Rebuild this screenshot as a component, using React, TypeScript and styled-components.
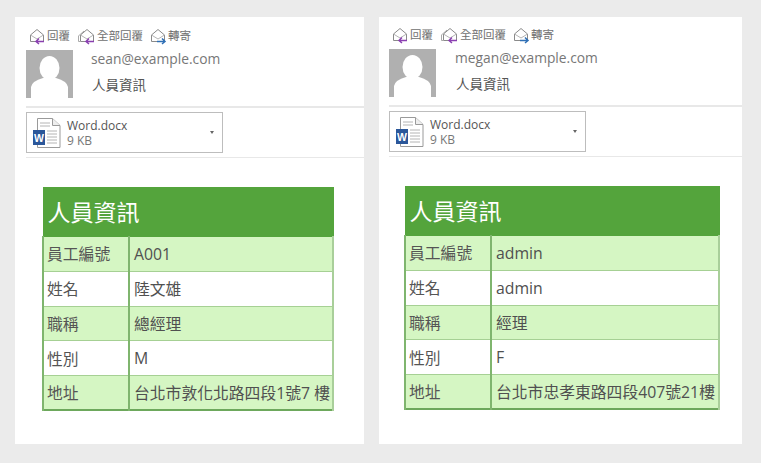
import React from "react";
import styled, { createGlobalStyle } from "styled-components";

const Global = createGlobalStyle`
  html, body { margin: 0; padding: 0; background: #ebebeb; }
  body { font-family: "Open Sans", "Noto Sans CJK TC", sans-serif; }
`;
const FONT = `"Open Sans", "Noto Sans CJK TC", sans-serif`;

const Page = styled.div`
  width: 761px; height: 463px; box-sizing: border-box;
  display: flex; align-items: flex-start; overflow: hidden;
  padding: 17px 0 0 15px; gap: 15px;
`;
const Card = styled.section<{ $w: number; $pad: number }>`
  width: ${p => p.$w}px; height: 427px; background: #fff; box-sizing: border-box;
  padding-left: ${p => p.$pad}px; display: flex; flex-direction: column;
`;
const Toolbar = styled.div<{ $top: number }>`
  display: flex; align-items: center; height: 20px; margin-top: ${p => p.$top}px; padding-left: 3px; gap: 7px;
`;
const Action = styled.div`
  display: flex; align-items: center; gap: 1px; font: 11.5px ${FONT}; color: #707070; line-height: 20px;
`;
const Header = styled.div`
  display: flex; margin-top: 4px; height: 48px;
`;
const Avatar = styled.svg`
  width: 47px; height: 48px; display: block; flex: none;
`;
const HeaderText = styled.div<{ $left: number }>`
  margin-left: ${p => p.$left}px; display: flex; flex-direction: column;
`;
const Email = styled.div`
  font: 13.8px/18px ${FONT}; color: #777;
`;
const Subject = styled.div`
  font: 13.5px/18px ${FONT}; color: #555; margin: 8px 0 0 1px;
`;
const Divider = styled.div<{ $top: number; $h?: number }>`
  height: ${p => p.$h ?? 1}px; background: #e8e8e8; margin-top: ${p => p.$top}px;
`;
const Attachment = styled.div`
  width: 197px; height: 41px; box-sizing: border-box; border: 1px solid #bdbdbd; margin-top: 4px;
  display: flex; align-items: center; padding-left: 6px;
`;
const FileInfo = styled.div`
  margin-left: 6px; flex: 1; display: flex; flex-direction: column;
`;
const FileName = styled.div`
  color: #555; font: 12px/15px ${FONT};
`;
const FileSize = styled.div`
  color: #777; font: 12px/15px ${FONT};
`;
const Caret = styled.div`
  width: 0; height: 0; border: 2.5px solid transparent; border-top: 3px solid #666; border-bottom: 0; margin-right: 8px;
`;
const Sheet = styled.table<{ $w: number; $first: number; $ml: number; $mt: number }>`
  width: ${p => p.$w}px; border-collapse: collapse; table-layout: fixed;
  margin: ${p => p.$mt}px 0 0 ${p => p.$ml}px;
  border: 1px solid #8fbc80; border-bottom: 2px solid #6da85c; box-sizing: border-box;
  font-family: ${FONT};
  col:first-child { width: ${p => p.$first}px; }
`;
const TitleCell = styled.th`
  background: #54a43c; color: #fff; height: 48px; padding: 0 0 0 4px; text-align: left;
  font: 400 23px/48px ${FONT}; border: 1px solid #54a43c;
`;
const Row = styled.tr<{ $alt: boolean }>`
  background: ${p => (p.$alt ? "#d5f6c3" : "#fff")};
  height: 34.8px;
`;
const Label = styled.td`
  border: 1px solid #a6d094; border-left: 2px solid #7fb56e; border-right: 2px solid #7fb56e;
  padding: 0 0 0 3px; font-size: 15.8px; color: #555; white-space: nowrap;
`;
const Value = styled.td`
  border: 1px solid #a6d094; border-right: 2px solid #a9cf9a; padding: 0 0 0 4px; font-size: 15.8px; color: #505050; white-space: nowrap; overflow: hidden;
`;

const Env: React.FC<{ kind: "r" | "a" | "f" }> = ({ kind }) => {
  const c = kind === "f" ? "#2f6fb5" : "#8a3fb0";
  return (
    <svg width={kind === "a" ? 19 : 17} height="17" viewBox={kind === "a" ? "0 0 19 17" : "0 0 17 17"} fill="none">
      {kind === "a" && <path d="M2 7.5 L7 3 M1.5 7.5 V13.5 H3" stroke="#aaa" />}
      <g transform={kind === "a" ? "translate(2 0)" : undefined}>
        <path d="M1.5 7 L8 1.5 L14.5 7 V13.5 H1.5 Z" fill="#fff" stroke="#8a8a8a" />
        <path d="M1.5 7 L8 11 L14.5 7" stroke="#b5b5b5" />
        {kind === "f" ? (
          <path d="M7 13.5 H15 M12 10.5 L15 13.5 L12 16" stroke={c} strokeWidth="1.5" />
        ) : (
          <path d="M15 13.5 H7 M10 10.5 L7 13.5 L10 16" stroke={c} strokeWidth="1.5" />
        )}
      </g>
    </svg>
  );
};

const WordIcon = () => (
  <svg width="28" height="32" viewBox="0 0 28 32" fill="none">
    <path d="M4.5 1.5 H19.5 L27 8.5 V30.5 H4.5 Z" fill="#fff" stroke="#9a9a9a" />
    <path d="M19.5 1.5 V8.5 H27" fill="#eee" stroke="#9a9a9a" />
    <path d="M7 6h10M7 9h10M14 14h10M14 17h10M14 20h10M14 23h10M14 26h10" stroke="#b4b4b4" />
    <rect x="0" y="13" width="12" height="15" fill="#2b579a" />
    <text x="6" y="24.5" textAnchor="middle" fontSize="10.5" fontWeight="700" fill="#fff" fontFamily="Liberation Sans, sans-serif">W</text>
  </svg>
);

type Mail = {
  w: number; pad: number; top: number; email: string; textLeft: number;
  tw: number; first: number; ml: number; mt: number; rows: [string, string][];
};

const mails: Mail[] = [
  {
    w: 349, pad: 11, top: 9, email: "sean@example.com", textLeft: 18,
    tw: 292, first: 86, ml: 16, mt: 29,
    rows: [["員工編號", "A001"], ["姓名", "陸文雄"], ["職稱", "總經理"], ["性別", "M"], ["地址", "台北市敦化北路四段1號7 樓"]],
  },
  {
    w: 363, pad: 10, top: 8, email: "megan@example.com", textLeft: 19,
    tw: 316, first: 86, ml: 15, mt: 29,
    rows: [["員工編號", "admin"], ["姓名", "admin"], ["職稱", "經理"], ["性別", "F"], ["地址", "台北市忠孝東路四段407號21樓"]],
  },
];

const MailCard: React.FC<{ m: Mail }> = ({ m }) => (
  <Card $w={m.w} $pad={m.pad}>
    <Toolbar $top={m.top}>
      <Action><Env kind="r" />回覆</Action>
      <Action><Env kind="a" />全部回覆</Action>
      <Action><Env kind="f" />轉寄</Action>
    </Toolbar>
    <Header>
      <Avatar viewBox="0 0 47 48">
        <rect width="47" height="48" fill="#b0b0b0" />
        <ellipse cx="23.5" cy="18" rx="10" ry="12" fill="#fff" />
        <path d="M5 48 V37 Q6 31 17 28 H30 Q41 31 42 37 V48 Z" fill="#fff" />
      </Avatar>
      <HeaderText $left={m.textLeft}>
        <Email>{m.email}</Email>
        <Subject>人員資訊</Subject>
      </HeaderText>
    </Header>
    <Divider $top={8} $h={2} />
    <Attachment>
      <WordIcon />
      <FileInfo>
        <FileName>Word.docx</FileName>
        <FileSize>9 KB</FileSize>
      </FileInfo>
      <Caret />
    </Attachment>
    <Divider $top={4} />
    <Sheet $w={m.tw} $first={m.first} $ml={m.ml} $mt={m.mt}>
      <colgroup><col /><col /></colgroup>
      <thead><tr><TitleCell colSpan={2}>人員資訊</TitleCell></tr></thead>
      <tbody>
        {m.rows.map(([k, v], i) => (
          <Row key={k} $alt={i % 2 === 0}><Label>{k}</Label><Value>{v}</Value></Row>
        ))}
      </tbody>
    </Sheet>
  </Card>
);

export default function App() {
  return (
    <Page>
      <Global />
      {mails.map(m => <MailCard key={m.email} m={m} />)}
    </Page>
  );
}
